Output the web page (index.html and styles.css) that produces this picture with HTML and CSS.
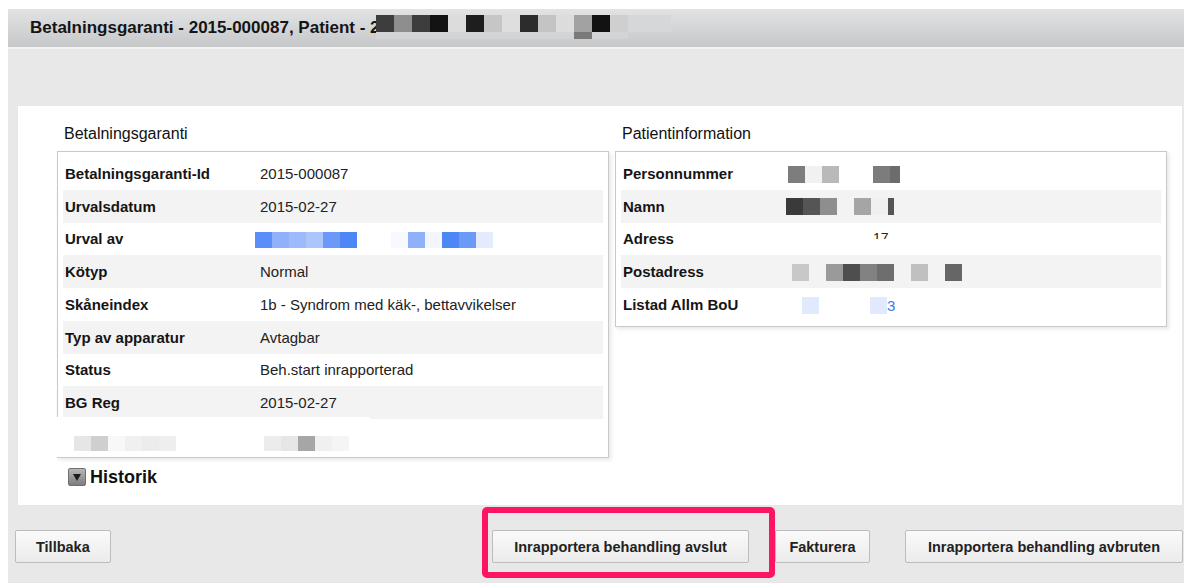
FILE: index.html
```html
<!DOCTYPE html>
<html lang="sv">
<head>
<meta charset="utf-8">
<title>Betalningsgaranti - 2015-000087</title>
<link rel="stylesheet" href="styles.css">
</head>
<body>
<div class="page">
  <header class="titlebar">
    <h1 class="titlebar-text">Betalningsgaranti - 2015-000087, Patient - 2<span class="mosaic mosaic-head"><i class="t3d"></i><i class="t8e"></i><i class="t3d"></i><i class="t13"></i><i class="tdc"></i><i class="t1e"></i><i class="tc6"></i><i class="tde"></i><i class="t2c"></i><i class="tc4"></i><i class="tdc"></i><i class="ta2 strip-dark"></i><i class="t12"></i><i class="tcf"></i><i class="td6 flat wide"></i></span></h1>
  </header>

  <main class="workspace">
    <section class="panel">
      <div class="columns">
        <div class="column">
          <h2 class="column-title">Betalningsgaranti</h2>
          <div class="card card-guarantee">
            <div class="kv"><span class="kv-label">Betalningsgaranti-Id</span><span class="kv-value">2015-000087</span></div>
            <div class="kv"><span class="kv-label">Urvalsdatum</span><span class="kv-value">2015-02-27</span></div>
            <div class="kv"><span class="kv-label">Urval av</span><span class="kv-value"><span class="mosaic mosaic-blue pull-left"><i class="b5b"></i><i class="b8f"></i><i class="b9d"></i><i class="bab"></i><i class="b6a"></i><i class="b4f"></i><i></i><i></i><i class="bf7"></i><i class="b8f"></i><i class="bf3"></i><i class="b4f"></i><i class="b6a"></i><i class="be3"></i></span></span></div>
            <div class="kv"><span class="kv-label">Kötyp</span><span class="kv-value">Normal</span></div>
            <div class="kv"><span class="kv-label">Skåneindex</span><span class="kv-value">1b - Syndrom med käk-, bettavvikelser</span></div>
            <div class="kv"><span class="kv-label">Typ av apparatur</span><span class="kv-value">Avtagbar</span></div>
            <div class="kv"><span class="kv-label">Status</span><span class="kv-value">Beh.start inrapporterad</span></div>
            <div class="kv"><span class="kv-label">BG Reg</span><span class="kv-value">2015-02-27</span></div>
            <div class="kv kv-redacted">
              <span class="kv-label"><span class="mosaic mosaic-soft indent-label"><i class="te6"></i><i class="tcf"></i><i class="tf8"></i><i class="tf0"></i><i class="tec"></i><i class="tee"></i></span></span>
              <span class="kv-value"><span class="mosaic mosaic-soft indent-value"><i class="tec"></i><i class="te6"></i><i class="ta6"></i><i class="tf0"></i><i class="tf5"></i></span></span>
            </div>
          </div>
          <button class="toggle" type="button"><span class="toggle-icon"></span>Historik</button>
        </div>

        <div class="column">
          <h2 class="column-title">Patientinformation</h2>
          <div class="card card-patient">
            <div class="kv"><span class="kv-label">Personnummer</span><span class="kv-value"><span class="mosaic mosaic-grey nudge-2"><i class="t7d"></i><i class="tf1"></i><i class="tb9"></i><i></i><i></i><i class="t7c"></i><i class="t6c narrow"></i></span></span></div>
            <div class="kv"><span class="kv-label">Namn</span><span class="kv-value"><span class="mosaic mosaic-grey"><i class="t3a"></i><i class="t55"></i><i class="t8e"></i><i></i><i class="ta5"></i><i class="tf0"></i><i class="t55 thin"></i></span></span></div>
            <div class="kv"><span class="kv-label">Adress</span><span class="kv-value kv-masked">17</span></div>
            <div class="kv"><span class="kv-label">Postadress</span><span class="kv-value"><span class="mosaic mosaic-grey nudge-6"><i class="tc8"></i><i></i><i class="t9a"></i><i class="t4e"></i><i class="t82"></i><i class="t6e"></i><i></i><i class="tc0"></i><i></i><i class="t66"></i></span></span></div>
            <div class="kv"><span class="kv-label">Listad Allm BoU</span><span class="kv-value"><span class="mosaic mosaic-grey nudge-16"><i class="be1"></i><i></i><i></i><i></i><i class="be1"></i></span><span class="link">3</span></span></div>
          </div>
        </div>
      </div>
    </section>

    <div class="actions">
      <button class="btn btn-back" type="button">Tillbaka</button>
      <span class="highlight"><button class="btn btn-report" type="button">Inrapportera behandling avslut</button></span>
      <button class="btn btn-invoice" type="button">Fakturera</button>
      <button class="btn btn-abort" type="button">Inrapportera behandling avbruten</button>
    </div>
  </main>
</div>
</body>
</html>
```

FILE: styles.css
```css
* {
  box-sizing: border-box;
}

html,
body {
  margin: 0;
  background: #fff;
}

body {
  font-family: "Liberation Sans", Arial, sans-serif;
  color: #1a1a1a;
}

.page {
  margin: 9px 0 0 8px;
  width: 1176px;
}

/* ---------- title bar ---------- */
.titlebar {
  height: 40px;
  display: flex;
  align-items: stretch;
  padding-left: 22px;
  background: linear-gradient(#e2e3e4, #c6c7c9);
  border-bottom: 2px solid #f2f2f2;
}

.titlebar-text {
  margin: 0;
  display: flex;
  align-items: center;
  font-size: 17px;
  font-weight: bold;
  color: #151515;
  white-space: nowrap;
}

/* ---------- pixelated (redacted) values ---------- */
.mosaic {
  display: inline-flex;
  vertical-align: middle;
}

.mosaic > i {
  display: block;
  width: 17px;
  height: 17px;
}

.mosaic-head {
  align-self: flex-start;
  margin: 6px 0 0 -4px;
}

.mosaic-head > i {
  width: 18px;
  height: 24px;
  border-bottom: 7px solid #d3d4d5;
}

.mosaic-head > i.strip-dark {
  border-bottom-color: #7a7a7a;
}

.mosaic-head > i.flat {
  height: 17px;
  border-bottom: 0;
}

.mosaic-head > i.wide {
  width: 43px;
}

.mosaic-blue > i {
  height: 16px;
}

.mosaic-soft > i {
  height: 15px;
}

.mosaic > i.narrow {
  width: 10px;
}

.mosaic > i.thin {
  width: 6px;
}

.pull-left {
  margin-left: -5px;
}

.indent-label {
  margin: 17px 0 0 9px;
}

.indent-value {
  margin: 17px 0 0 4px;
}

.nudge-2 {
  margin-left: 2px;
}

.nudge-6 {
  margin-left: 6px;
}

.nudge-16 {
  margin-left: 16px;
}

/* grey tones */
.t12 { background: #121212; }
.t13 { background: #131313; }
.t1e { background: #1e1e1e; }
.t2c { background: #2c2c2c; }
.t3a { background: #3a3a3a; }
.t3d { background: #3d3d3d; }
.t4e { background: #4e4e4e; }
.t55 { background: #555; }
.t66 { background: #666; }
.t6c { background: #6c6c6c; }
.t6e { background: #6e6e6e; }
.t7c { background: #7c7c7c; }
.t7d { background: #7d7d7d; }
.t82 { background: #828282; }
.t8e { background: #8e8e8e; }
.t9a { background: #9a9a9a; }
.ta2 { background: #a2a2a2; }
.ta5 { background: #a5a5a5; }
.ta6 { background: #a6a6a6; }
.tb9 { background: #b9b9b9; }
.tc0 { background: #c0c0c0; }
.tc4 { background: #c4c4c4; }
.tc6 { background: #c6c6c6; }
.tc8 { background: #c8c8c8; }
.tcf { background: #cfcfcf; }
.td6 { background: #d6d7d8; }
.tdc { background: #dcdcdc; }
.tde { background: #dedede; }
.te6 { background: #e6e6e6; }
.tec { background: #ececec; }
.tee { background: #eeeeee; }
.tf0 { background: #f0f0f0; }
.tf1 { background: #f1f1f1; }
.tf5 { background: #f5f5f5; }
.tf8 { background: #f8f8f8; }

/* blue tones */
.b4f { background: #4f86f7; }
.b5b { background: #5b8ef8; }
.b6a { background: #6a99f8; }
.b8f { background: #8fb1f9; }
.b9d { background: #9dbbfa; }
.bab { background: #abc6fb; }
.be1 { background: #e1e9fd; }
.be3 { background: #e3ebfd; }
.bf3 { background: #f3f6ff; }
.bf7 { background: #f7f9ff; }

/* ---------- workspace ---------- */
.workspace {
  height: 534px;
  padding-top: 57px;
  background: #e8e8e8;
}

.panel {
  height: 399px;
  margin: 0 2px 0 10px;
  padding: 18px 0 0 39px;
  background: #fff;
}

.columns {
  display: flex;
  align-items: flex-start;
  gap: 6px;
}

.column {
  width: 552px;
}

.column-title {
  margin: 0 0 8px;
  padding-left: 7px;
  font-size: 16px;
  font-weight: normal;
  line-height: 19px;
  color: #111;
}

.card {
  padding: 5px;
  background: #fff;
  border: 1px solid #c9c9c9;
  box-shadow: 2px 2px 4px rgba(0, 0, 0, 0.1);
}

.kv {
  display: flex;
  align-items: center;
  height: 32.75px;
  padding-left: 2px;
}

.kv:nth-child(even) {
  background: #f3f3f3;
}

.kv-label {
  flex: none;
  width: 195px;
  font-size: 15px;
  font-weight: bold;
  color: #151515;
}

.card-patient .kv-label {
  width: 163px;
}

.kv-value {
  font-size: 15px;
  color: #222;
  white-space: nowrap;
}

/* house number partly hidden behind a white mask */
.kv-masked {
  position: relative;
  align-self: flex-start;
  margin-top: 8px;
  padding-left: 87px;
  line-height: 15px;
  font-size: 14px;
}

.kv-masked::after {
  content: "";
  position: absolute;
  left: 80px;
  right: -10px;
  top: 8px;
  height: 12px;
  background: #fff;
}

.link {
  font-size: 15px;
  color: #3c7ae8;
  vertical-align: middle;
}

/* last row of the guarantee card is masked out */
.kv-redacted {
  position: relative;
  align-items: flex-start;
}

.kv-redacted::before {
  content: "";
  position: absolute;
  left: -8px;
  top: -2px;
  bottom: -5px;
  width: 315px;
  background: #fff;
}

.kv-redacted > span {
  position: relative;
}

/* ---------- history toggle ---------- */
.toggle {
  display: flex;
  align-items: center;
  gap: 4px;
  margin: 9px 0 0 11px;
  padding: 0;
  border: 0;
  background: none;
  font-family: inherit;
  font-size: 18px;
  font-weight: bold;
  color: #111;
}

.toggle-icon {
  position: relative;
  width: 18px;
  height: 18px;
  border: 1px solid #707070;
  border-radius: 2px;
  background: linear-gradient(#b8b8b8, #7d7d7d);
}

.toggle-icon::after {
  content: "";
  position: absolute;
  left: 4px;
  top: 5px;
  border-left: 4px solid transparent;
  border-right: 4px solid transparent;
  border-top: 7px solid #1c1c1c;
}

/* ---------- action buttons ---------- */
.actions {
  display: flex;
  align-items: center;
  margin-top: 25px;
  padding: 0 1px 0 7px;
}

.btn {
  height: 33px;
  padding: 0 20px;
  border: 1px solid #bcbcbc;
  border-radius: 2px;
  background: linear-gradient(#fafafa, #ebebeb);
  font-family: inherit;
  font-size: 14.5px;
  font-weight: bold;
  color: #222;
  white-space: nowrap;
}

.btn-report {
  padding: 0 21px;
}

.btn-invoice {
  margin-left: 26px;
  padding: 0 13.5px;
}

.btn-abort {
  margin-left: 35px;
  padding: 0 22px;
}

.highlight {
  position: relative;
  display: flex;
  margin-left: auto;
}

.highlight::after {
  content: "";
  position: absolute;
  top: -23px;
  right: -26px;
  bottom: -15px;
  left: -10px;
  border: 6px solid #fe1464;
  border-radius: 5px;
  pointer-events: none;
}
```
